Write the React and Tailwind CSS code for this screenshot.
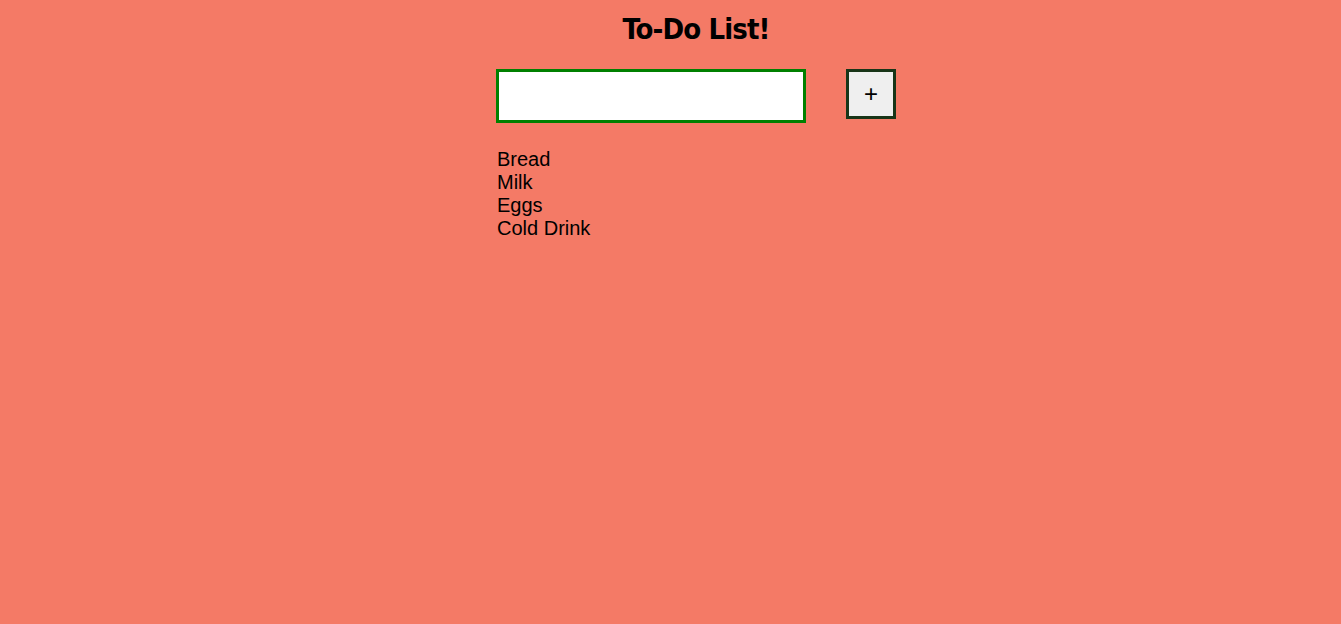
export default function App() {
  const items = ["Bread", "Milk", "Eggs", "Cold Drink"];

  return (
    <div className="min-h-screen w-full bg-[#f47a66] font-['Liberation_Sans',Arial,sans-serif] text-black">
      <div className="mx-auto w-[451px] pl-[51px]">
        <h1 className="pt-[10px] text-center font-['DejaVu_Sans_Condensed','Liberation_Sans',sans-serif] text-[29px] font-bold leading-[38px] tracking-[-0.9px]">
          To-Do List!
        </h1>

        <div className="mt-[21px] flex items-start gap-[40px]">
          <input
            type="text"
            className="h-[54px] w-[310px] border-[3px] border-[#008000] bg-white px-2 text-lg outline-none"
          />
          <button className="flex h-[50px] w-[50px] items-center justify-center border-[3px] border-[#183518] bg-[#efefef] text-[24px] leading-none">
            +
          </button>
        </div>

        <ul className="mt-[25px] pl-[1px] text-[20px] leading-[23px]">
          {items.map((it) => (
            <li key={it}>{it}</li>
          ))}
        </ul>
      </div>
    </div>
  );
}
